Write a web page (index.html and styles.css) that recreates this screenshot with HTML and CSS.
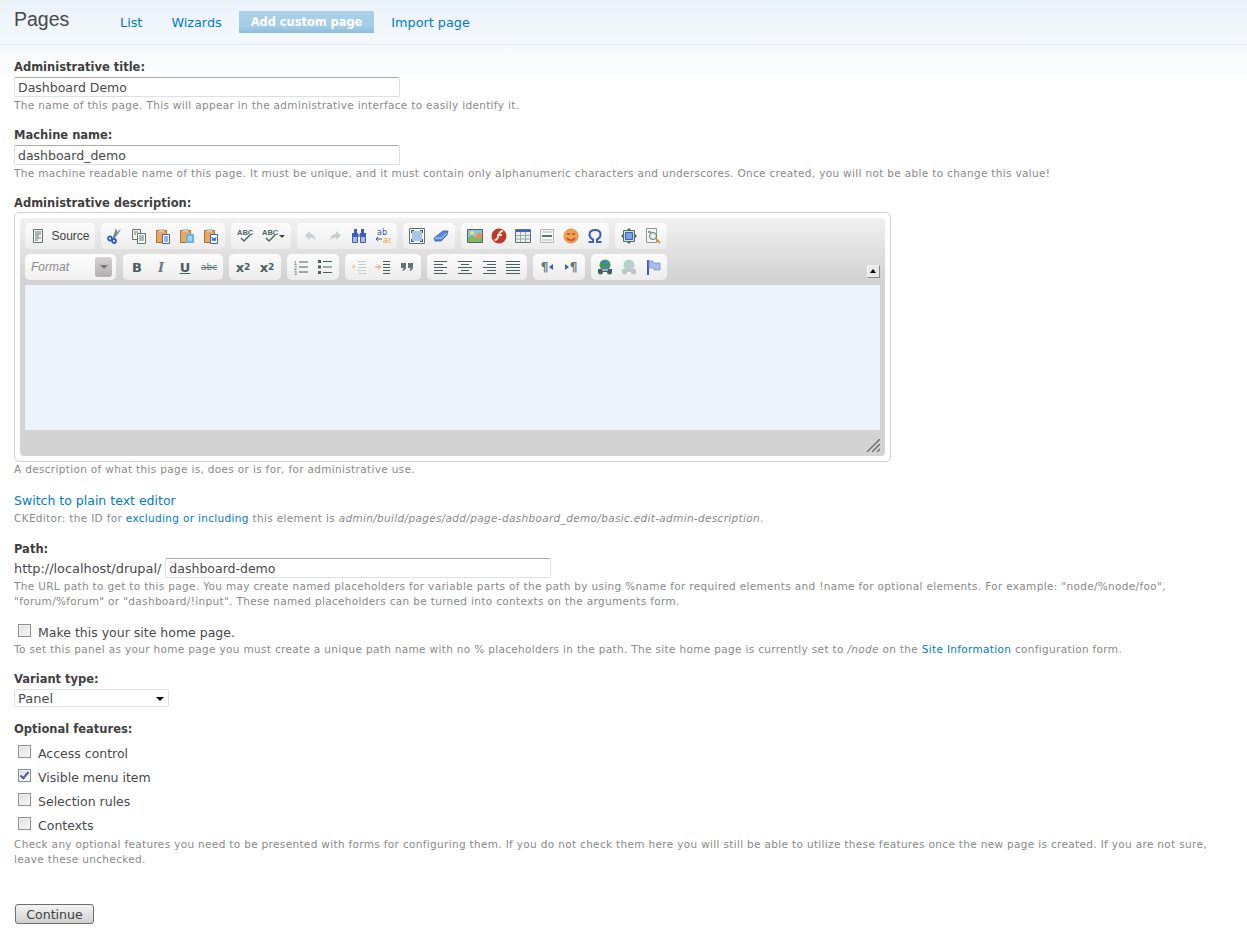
FILE: index.html
```html
<!DOCTYPE html>
<html lang="en">
<head>
  <meta charset="UTF-8">
  <meta name="viewport" content="width=device-width, initial-scale=1.0">
  <title>Pages</title>
  <link rel="stylesheet" href="styles.css">
</head>
<body>

<svg class="icon-defs" width="0" height="0">
  <symbol id="i-source" viewBox="0 0 16 16"><path d="M3.500 1.500h9v13h-9z" fill="#f7f7ef" stroke="#5f7470"/><path d="M5 4h6M5 6h6M5 8h4M5 10h6M5 12h3" stroke="#5f7470"/></symbol>
  <symbol id="i-cut" viewBox="0 0 16 16"><path d="M5 10 11 3l3-2-2 4-5 6z" fill="#8a9ba6"/><path d="M6 9 8 3l1-3 1 4-2 6z" fill="#6f8290"/><circle cx="3" cy="10.500" r="2" fill="none" stroke="#2f5cc4" stroke-width="1.800"/><circle cx="7" cy="13" r="2" fill="none" stroke="#2f5cc4" stroke-width="1.800"/></symbol>
  <symbol id="i-copy" viewBox="0 0 16 16"><path d="M1.500 1.500h8v10h-8z" fill="#f4f4ea" stroke="#5f7470"/><path d="M6.500 5.500h8v10h-8z" fill="#fff" stroke="#5f7470"/><path d="M8 8h5M8 10h5M8 12h5M3 4h4M3 6h2" stroke="#5f7470"/></symbol>
  <symbol id="i-paste" viewBox="0 0 16 16"><path d="M1.500 2.500h10v12h-10z" fill="#e8a860" stroke="#a87038"/><path d="M4 1h5v3H4z" fill="#c8c8c0"/><path d="M7.500 6.500h7v9h-7z" fill="#fff" stroke="#3a62c0"/><path d="M9 9h4M9 11h4M9 13h4" stroke="#3a62c0"/></symbol>
  <symbol id="i-paste-text" viewBox="0 0 16 16"><path d="M1.500 2.500h10v12h-10z" fill="#e8a860" stroke="#a87038"/><path d="M4 1h5v3H4z" fill="#c8c8c0"/><path d="M7 6h8v9H7z" fill="#6cb4e8"/><path d="M9 8h4v5H9z" fill="#9fd4f4"/></symbol>
  <symbol id="i-paste-word" viewBox="0 0 16 16"><path d="M1.500 2.500h10v12h-10z" fill="#e8a860" stroke="#a87038"/><path d="M4 1h5v3H4z" fill="#c8c8c0"/><path d="M7.500 6.500h7v9h-7z" fill="#fff" stroke="#3a62c0"/><path d="M9 9l1 4 1-3 1 3 1-4" fill="none" stroke="#3a62c0"/></symbol>
  <symbol id="i-undo" viewBox="0 0 16 16"><path d="M7 3 2 7.500 7 12V9.500c3 0 4.500 1 5.500 3 0-4-2-6.500-5.500-6.500z" fill="#c4ced2"/></symbol>
  <symbol id="i-redo" viewBox="0 0 16 16"><path d="M9 3l5 4.500L9 12V9.500c-3 0-4.500 1-5.500 3 0-4 2-6.500 5.500-6.500z" fill="#c4ced2"/></symbol>
  <symbol id="i-find" viewBox="0 0 16 16"><path d="M3 1h3v4h1v4H1V5h2zM10 1h3v4h2v4H9V5h1z" fill="#3e5cb8"/><path d="M1.500 8.500h5v6h-5zM9.500 8.500h5v6h-5z" fill="#a9bce8" stroke="#3e5cb8"/><path d="M7 6h2v3H7z" fill="#8898c8"/></symbol>
  <symbol id="i-max" viewBox="0 0 16 16"><path d="M.5.500h15v15H.5z" fill="#fff" stroke="#5f7470"/><path d="M3 3h10v10H3z" fill="#a8c4ec"/><path d="M2 2h3v1H3v2H2zM11 2h3v3h-1V3h-2zM2 11h1v2h2v1H2zM13 11h1v3h-3v-1h2z" fill="#4a5c58"/></symbol>
  <symbol id="i-eraser" viewBox="0 0 16 16"><path d="M1 10 10 3h5l-1 4-6 6H2z" fill="#5a88e0" stroke="#3458a8" stroke-width=".8"/><path d="M1.500 10h7L14 5" fill="none" stroke="#b8d0f4"/></symbol>
  <symbol id="i-image" viewBox="0 0 16 16"><path d="M.5 1.500h15v13H.5z" fill="#8cc4e0" stroke="#4e6a64"/><path d="M1 10l4-3 4 3 6-1v5H1z" fill="#8cb45c"/><circle cx="5" cy="5" r="2" fill="#f4e070"/><path d="M9 7l3-3 3 3v3H9z" fill="#e89048"/></symbol>
  <symbol id="i-flash" viewBox="0 0 16 16"><circle cx="8" cy="8" r="7.500" fill="#bd3a2c"/><path d="M12 3C8 3 8 6 7 9c-.5 2-2 3-3.500 3M6 7h5" fill="none" stroke="#f6e4dc" stroke-width="1.800"/></symbol>
  <symbol id="i-table" viewBox="0 0 16 16"><path d="M.5 1.500h15v13H.5z" fill="#eef0f0" stroke="#5f7470"/><path d="M1 2h14v2H1z" fill="#3e64c0"/><path d="M1 7.500h14M1 11h14M5.500 4v10M10.500 4v10" stroke="#9aa8a8"/></symbol>
  <symbol id="i-hr" viewBox="0 0 16 16"><path d="M1.500 1.500h13v13h-13z" fill="#f8f8f8" stroke="#b0b4b4"/><path d="M3 4h10M3 12h10" stroke="#b0b4b4"/><path d="M3 7h10v2H3z" fill="#5f7470"/></symbol>
  <symbol id="i-smiley" viewBox="0 0 16 16"><circle cx="8" cy="8" r="7" fill="#f4a050" stroke="#e88c40"/><path d="M4 6h3M9 6h3" stroke="#a05a20" stroke-width="1.500"/><path d="M4 10c2 3 6 3 8 0" fill="none" stroke="#b8482c" stroke-width="1.500"/></symbol>
  <symbol id="i-omega" viewBox="0 0 16 16"><path d="M1.500 14H6v-2.500C4 10.500 2.500 9 2.500 6.500 2.500 3.500 5 2 8 2s5.500 1.500 5.500 4.500c0 2.500-1.500 4-3.500 5V14h4.500" fill="none" stroke="#3e5cc0" stroke-width="2"/></symbol>
  <symbol id="i-block" viewBox="0 0 16 16"><path d="M8 0l2 2H6zM8 16l-2-2h4zM0 8l2-2v4zM16 8l-2 2V6z" fill="#4e6a64"/><path d="M2.500 2.500h11v11h-11z" fill="#cfe0d8" stroke="#4e6a64"/><path d="M4.500 4.500h7v7h-7z" fill="#7ca0e4" stroke="#3e5cc0"/></symbol>
  <symbol id="i-preview" viewBox="0 0 16 16"><path d="M1.500.5h10v14h-10z" fill="#f6f6f0" stroke="#8a9a98"/><circle cx="8" cy="8" r="3.500" fill="#e4eef4" stroke="#5f7470"/><path d="M11 11l4 4" stroke="#d89030" stroke-width="2"/><path d="M3 3h3v2H3z" fill="#8a9a98"/></symbol>
  <symbol id="i-ul" viewBox="0 0 16 16"><path d="M1 1h3v3H1zM1 6.500h3v3H1zM1 12h3v3H1z" fill="#46605e"/><path d="M6 2.500h9M6 8h9M6 13.500h9" stroke="#46605e"/></symbol>
  <symbol id="i-outdent" viewBox="0 0 16 16"><path d="M1 8h4M3.500 5.500 1 8l2.500 2.500" fill="none" stroke="#f2c89c"/><path d="M7 2.500h8M7 5.500h8M7 8.500h8M7 11.500h8M7 14.500h8" stroke="#c4ced2"/></symbol>
  <symbol id="i-indent" viewBox="0 0 16 16"><path d="M0 8h5M3 5.500 5.500 8 3 10.500" fill="none" stroke="#e89840"/><path d="M8 2.500h7M8 5.500h7M8 8.500h7M8 11.500h7M8 14.500h7" stroke="#46605e"/></symbol>
  <symbol id="i-quote" viewBox="0 0 16 16"><path d="M2 4h5v4c0 2-1 3-3 4l-.5-1c.7-.5 1-1 1-2H2zM9 4h5v4c0 2-1 3-3 4l-.5-1c.7-.5 1-1 1-2H9z" fill="#5f7470"/></symbol>
  <symbol id="i-left" viewBox="0 0 16 16"><path d="M1 2.500h13M1 5.500h9M1 8.500h13M1 11.500h9M1 14.500h13" stroke="#46605e"/></symbol>
  <symbol id="i-center" viewBox="0 0 16 16"><path d="M1 2.500h14M4 5.500h8M1 8.500h14M4 11.500h8M1 14.500h14" stroke="#46605e"/></symbol>
  <symbol id="i-right" viewBox="0 0 16 16"><path d="M2 2.500h13M6 5.500h9M2 8.500h13M6 11.500h9M2 14.500h13" stroke="#46605e"/></symbol>
  <symbol id="i-justify" viewBox="0 0 16 16"><path d="M1 2.500h14M1 5.500h14M1 8.500h14M1 11.500h14M1 14.500h14" stroke="#46605e"/></symbol>
  <symbol id="i-link" viewBox="0 0 16 16"><circle cx="8" cy="6" r="5.500" fill="#3c9a58"/><path d="M5 2h5v3H6zM9 7h3v3H8z" fill="#4a78d8"/><path d="M1 10h14v3H1z" fill="#46605e"/><circle cx="3.500" cy="13" r="2.500" fill="#46605e"/><circle cx="12.500" cy="13" r="2.500" fill="#46605e"/><path d="M5 11h6" stroke="#fff"/></symbol>
  <symbol id="i-unlink" viewBox="0 0 16 16"><circle cx="8" cy="6" r="5.500" fill="#b4d4c0"/><path d="M5 2h5v3H6zM9 7h3v3H8z" fill="#b8c8e8"/><path d="M1 10h14v3H1z" fill="#bcc6c6"/><circle cx="3.500" cy="13" r="2.500" fill="#bcc6c6"/><circle cx="12.500" cy="13" r="2.500" fill="#bcc6c6"/></symbol>
  <symbol id="i-flag" viewBox="0 0 16 16"><path d="M2 1h2v15H2z" fill="#3e5cc0"/><path d="M4 2h4v2h7v7H9V9H4z" fill="#a8bce8" stroke="#7c94d0" stroke-width=".8"/></symbol>
</svg>

<div class="page-head">
  <h1 class="page-title">Pages</h1>
  <ul class="tabs">
    <li><a href="#">List</a></li>
    <li><a href="#">Wizards</a></li>
    <li class="active"><a href="#">Add custom page</a></li>
    <li><a href="#">Import page</a></li>
  </ul>
</div>

<form class="page-form">
  <div class="field">
    <label class="field-label" for="adminTitle">Administrative title:</label>
    <input class="text-input" type="text" id="adminTitle" value="Dashboard Demo">
    <p class="desc">The name of this page. This will appear in the administrative interface to easily identify it.</p>
  </div>

  <div class="field">
    <label class="field-label" for="machineName">Machine name:</label>
    <input class="text-input" type="text" id="machineName" value="dashboard_demo">
    <p class="desc">The machine readable name of this page. It must be unique, and it must contain only alphanumeric characters and underscores. Once created, you will not be able to change this value!</p>
  </div>

  <div class="field">
    <div class="field-label">Administrative description:</div>
    <div class="editor">
      <div class="editor-inner">
        <div class="toolbar">
          <div class="tool-row">
            <span class="tool-group"><span class="tool tool-source"><svg class="ico"><use href="#i-source"/></svg>Source</span></span>
            <span class="tool-group">
              <span class="tool"><svg class="ico"><use href="#i-cut"/></svg></span>
              <span class="tool"><svg class="ico"><use href="#i-copy"/></svg></span>
              <span class="tool"><svg class="ico"><use href="#i-paste"/></svg></span>
              <span class="tool"><svg class="ico"><use href="#i-paste-text"/></svg></span>
              <span class="tool"><svg class="ico"><use href="#i-paste-word"/></svg></span>
            </span>
            <span class="tool-group">
              <span class="tool"><svg class="ico" viewBox="0 0 16 16"><text x="0" y="7" class="icon-abc">ABC</text><path d="M4 10l3 3 6-6" fill="none" stroke="#4a6a68" stroke-width="1.500"/></svg></span>
              <span class="tool tool-wide"><svg class="ico" viewBox="0 0 16 16"><text x="0" y="7" class="icon-abc">ABC</text><path d="M4 10l3 3 6-6" fill="none" stroke="#4a6a68" stroke-width="1.500"/></svg><i class="tool-caret"></i></span>
            </span>
            <span class="tool-group">
              <span class="tool"><svg class="ico"><use href="#i-undo"/></svg></span>
              <span class="tool"><svg class="ico"><use href="#i-redo"/></svg></span>
              <span class="tool"><svg class="ico"><use href="#i-find"/></svg></span>
              <span class="tool"><svg class="ico" viewBox="0 0 16 16"><text class="icon-ab"><tspan x="2" y="7">ab</tspan><tspan class="icon-ac" x="8" y="15">ac</tspan></text><path d="M1 11h6M3 9l-2 2 2 2" fill="none" stroke="#4050b0"/></svg></span>
            </span>
            <span class="tool-group">
              <span class="tool"><svg class="ico"><use href="#i-max"/></svg></span>
              <span class="tool"><svg class="ico"><use href="#i-eraser"/></svg></span>
            </span>
            <span class="tool-group">
              <span class="tool"><svg class="ico"><use href="#i-image"/></svg></span>
              <span class="tool"><svg class="ico"><use href="#i-flash"/></svg></span>
              <span class="tool"><svg class="ico"><use href="#i-table"/></svg></span>
              <span class="tool"><svg class="ico"><use href="#i-hr"/></svg></span>
              <span class="tool"><svg class="ico"><use href="#i-smiley"/></svg></span>
              <span class="tool"><svg class="ico"><use href="#i-omega"/></svg></span>
            </span>
            <span class="tool-group">
              <span class="tool"><svg class="ico"><use href="#i-block"/></svg></span>
              <span class="tool"><svg class="ico"><use href="#i-preview"/></svg></span>
            </span>
          </div>
          <div class="tool-row tool-row-second">
            <span class="tool-combo"><span class="combo-text">Format</span><span class="combo-arrow"></span></span>
            <span class="tool-group">
              <span class="tool tool-letter tool-bold">B</span>
              <span class="tool tool-letter tool-italic">I</span>
              <span class="tool tool-letter tool-under">U</span>
              <span class="tool tool-letter tool-strike">abc</span>
            </span>
            <span class="tool-group">
              <span class="tool tool-letter tool-bold">x<sub>2</sub></span>
              <span class="tool tool-letter tool-bold">x<sup>2</sup></span>
            </span>
            <span class="tool-group">
              <span class="tool"><svg class="ico" viewBox="0 0 16 16"><text class="icon-num"><tspan x="1" y="5.500">1</tspan><tspan x="1" y="10.500">2</tspan><tspan x="1" y="15.500">3</tspan></text><path d="M6 3h9M6 8h9M6 13h9" stroke="#46605e"/></svg></span>
              <span class="tool"><svg class="ico"><use href="#i-ul"/></svg></span>
            </span>
            <span class="tool-group">
              <span class="tool"><svg class="ico"><use href="#i-outdent"/></svg></span>
              <span class="tool"><svg class="ico"><use href="#i-indent"/></svg></span>
              <span class="tool"><svg class="ico"><use href="#i-quote"/></svg></span>
            </span>
            <span class="tool-group">
              <span class="tool"><svg class="ico"><use href="#i-left"/></svg></span>
              <span class="tool"><svg class="ico"><use href="#i-center"/></svg></span>
              <span class="tool"><svg class="ico"><use href="#i-right"/></svg></span>
              <span class="tool"><svg class="ico"><use href="#i-justify"/></svg></span>
            </span>
            <span class="tool-group">
              <span class="tool tool-letter tool-para">&para;<i class="para-left"></i></span>
              <span class="tool tool-letter tool-para"><i class="para-right"></i>&para;</span>
            </span>
            <span class="tool-group">
              <span class="tool"><svg class="ico"><use href="#i-link"/></svg></span>
              <span class="tool"><svg class="ico"><use href="#i-unlink"/></svg></span>
              <span class="tool"><svg class="ico"><use href="#i-flag"/></svg></span>
            </span>
            <span class="collapse-btn"></span>
          </div>
        </div>
        <div class="editor-body"></div>
        <div class="editor-foot">
          <svg class="grip" width="13" height="13" viewBox="0 0 13 13"><path d="M0 13 13 0M5 13l8-8M10 13l3-3" stroke="#666" stroke-width="1.300"/></svg>
        </div>
      </div>
    </div>
    <p class="desc desc-editor">A description of what this page is, does or is for, for administrative use.</p>
  </div>

  <div class="switch-block">
    <a class="switch-link" href="#">Switch to plain text editor</a>
    <p class="desc desc-cke">CKEditor: the ID for <a href="#">excluding or including</a> this element is <em>admin/build/pages/add/page-dashboard_demo/basic.edit-admin-description</em>.</p>
  </div>

  <div class="field field-path">
    <label class="field-label" for="path">Path:</label>
    <div class="path-row">
      <span class="path-prefix">http://localhost/drupal/</span>
      <input class="text-input" type="text" id="path" value="dashboard-demo">
    </div>
    <p class="desc">The URL path to get to this page. You may create named placeholders for variable parts of the path by using %name for required elements and !name for optional elements. For example: "node/%node/foo", "forum/%forum" or "dashboard/!input". These named placeholders can be turned into contexts on the arguments form.</p>
  </div>

  <div class="field field-home">
    <label class="check-row"><input type="checkbox"> Make this your site home page.</label>
    <p class="desc">To set this panel as your home page you must create a unique path name with no % placeholders in the path. The site home page is currently set to <em>/node</em> on the <a href="#">Site Information</a> configuration form.</p>
  </div>

  <div class="field field-variant">
    <label class="field-label" for="variant">Variant type:</label>
    <span class="select-wrap">
      <select id="variant"><option>Panel</option></select>
    </span>
  </div>

  <div class="field field-features">
    <div class="field-label">Optional features:</div>
    <label class="check-row"><input type="checkbox"> Access control</label>
    <label class="check-row"><input type="checkbox" checked> Visible menu item</label>
    <label class="check-row"><input type="checkbox"> Selection rules</label>
    <label class="check-row"><input type="checkbox"> Contexts</label>
    <p class="desc desc-features">Check any optional features you need to be presented with forms for configuring them. If you do not check them here you will still be able to utilize these features once the new page is created. If you are not sure, leave these unchecked.</p>
  </div>

  <button class="btn-continue" type="button">Continue</button>
</form>

</body>
</html>
```

FILE: styles.css
```css
body {
  margin: 0;
  padding: 0;
  height: 939px;
  overflow: hidden;
  font-family: "DejaVu Sans", sans-serif;
  font-size: 12.5px;
  color: #494949;
  background: linear-gradient(to bottom, #e9f1f9 0, #f5f9fc 44px, #f5f9fc 45px, #fff 85px) no-repeat #fff;
}

a {
  color: #027ac6;
  text-decoration: none;
}

.icon-defs {
  position: absolute;
}

.icon-abc {
  font: bold 7.500px "Liberation Sans", sans-serif;
  fill: #4a6a68;
}

.icon-ab {
  font: 8px "DejaVu Sans", sans-serif;
  fill: #4050b0;
}

.icon-ac {
  fill: #e8a040;
}

.icon-num {
  font: 5px "Liberation Sans", sans-serif;
  fill: #46605e;
}

/* header */
.page-head {
  display: flex;
  height: 45px;
  box-sizing: border-box;
  border-bottom: 1px solid #e3ebf2;
  padding-left: 14px;
}

.page-title {
  margin: 0;
  width: 94px;
  font-family: "Liberation Sans", sans-serif;
  font-size: 19.500px;
  font-weight: normal;
  line-height: 38px;
  color: #494949;
}

.tabs {
  display: flex;
  gap: 5px;
  margin: 11px 0 0;
  padding: 0;
  list-style: none;
  font-size: 12.800px;
  line-height: 23px;
}

.tabs a {
  display: block;
  height: 22px;
  padding: 0 12px;
}

.tabs li.active a {
  color: #fff;
  font-size: 11.400px;
  font-weight: bold;
  background: linear-gradient(to bottom, #a9d0e8 0, #a4cde6 70%, #8cbcdc 100%);
}

/* form */
.page-form {
  padding: 0 14px;
}

.field {
  margin-bottom: 15px;
}

.field-label {
  display: block;
  font-size: 11.500px;
  font-weight: bold;
  line-height: 15px;
  color: #3f3f3f;
}

.page-form > .field:first-child {
  padding-top: 15px;
}

.text-input {
  display: block;
  width: 386px;
  height: 20px;
  box-sizing: border-box;
  margin: 2px 0 0;
  padding: 0 3px;
  border: 1px solid #d9e0e6;
  border-top-color: #a8a8a8;
  border-radius: 2px;
  background: #fff;
  font: 12.500px "DejaVu Sans", sans-serif;
  color: #494949;
}

.desc {
  margin: 1px 0 0;
  font-size: 10.500px;
  line-height: 15px;
  color: #898989;
  letter-spacing: 0.330px;
}

/* editor */
.editor {
  width: 877px;
  height: 250px;
  box-sizing: border-box;
  margin-top: 1px;
  padding: 5px;
  background: #fff;
  border: 1px solid #d0d0d0;
  border-radius: 5px;
}

.editor-inner {
  display: flex;
  flex-direction: column;
  height: 238px;
  box-sizing: border-box;
  padding: 0 5px;
  background: linear-gradient(to bottom, #f1f1f1 0, #d3d3d3 60px) #d3d3d3;
  border-radius: 4px;
}

.toolbar {
  height: 67px;
  padding-top: 5px;
  box-sizing: border-box;
}

.tool-row {
  display: flex;
  gap: 6px;
  height: 26px;
}

.tool-row-second {
  position: relative;
  margin-top: 5px;
}

.tool-group {
  display: flex;
  padding: 0 2px;
  border-radius: 5px;
  background: linear-gradient(to bottom, #fcfcfc, #ececec);
}

.tool {
  display: flex;
  align-items: center;
  justify-content: center;
  width: 24px;
  height: 26px;
}

.tool-wide {
  width: 32px;
  gap: 1px;
}

.tool-caret {
  border: 3px solid transparent;
  border-top: 3px solid #444;
  border-bottom: 0;
}

.tool-source {
  width: 66px;
  gap: 5px;
  font: 12px "Liberation Sans", sans-serif;
  color: #444;
}

.tool-letter {
  color: #46605e;
  line-height: 16px;
}

.tool-bold {
  font: bold 13px "DejaVu Sans", sans-serif;
}

.tool-bold sub,
.tool-bold sup {
  font-size: 9px;
  line-height: 0;
}

.tool-italic {
  font: italic bold 13px "DejaVu Serif", serif;
  color: #6a7c7a;
}

.tool-under {
  font: bold 13px "DejaVu Sans", sans-serif;
  text-decoration: underline;
}

.tool-strike {
  font: 9px "DejaVu Sans", sans-serif;
  color: #5f7470;
  text-decoration: line-through;
}

.tool-para {
  gap: 1px;
  font: bold 12px "DejaVu Sans", sans-serif;
  color: #5f7470;
}

.para-left,
.para-right {
  border: 3px solid transparent;
}

.para-left {
  border-right: 4px solid #3e5cb8;
  border-left: 0;
}

.para-right {
  border-left: 4px solid #3e5cb8;
  border-right: 0;
}

.ico {
  width: 16px;
  height: 16px;
  flex: none;
}

.tool-combo {
  display: flex;
  align-items: center;
  justify-content: space-between;
  width: 91px;
  margin-right: 1px;
  box-sizing: border-box;
  padding: 0 4px 0 6px;
  border-radius: 5px;
  background: linear-gradient(to bottom, #fdfdfd, #f0f0f0);
}

.combo-text {
  font: italic 12px "Liberation Sans", sans-serif;
  color: #8a8a8a;
}

.combo-arrow {
  position: relative;
  width: 17px;
  height: 20px;
  border-radius: 3px;
  background: linear-gradient(to bottom, #d6d2d2, #b4aeae);
}

.combo-arrow::after {
  content: "";
  position: absolute;
  left: 5px;
  top: 8px;
  border: 4px solid transparent;
  border-top: 4px solid #777;
  border-bottom: 0;
}

.collapse-btn {
  position: absolute;
  right: 0;
  top: 11px;
  width: 13px;
  height: 13px;
  box-sizing: border-box;
  background: #e8e8e8;
  border: 1px solid #f4f4f4;
  border-right-color: #8a8a8a;
  border-bottom-color: #8a8a8a;
}

.collapse-btn::after {
  content: "";
  position: absolute;
  left: 2px;
  top: 3px;
  border: 3.500px solid transparent;
  border-bottom: 4px solid #000;
  border-top: 0;
}

.editor-body {
  height: 145px;
  background: #edf3fa;
}

.editor-foot {
  display: flex;
  flex: 1;
  justify-content: flex-end;
  align-items: flex-end;
  padding-bottom: 4px;
}

.grip {
  display: block;
}

.desc-editor {
  margin-top: 0;
}

/* switch link + cke note */
.switch-block {
  margin-top: 16px;
}

.switch-link {
  font-size: 12.500px;
  line-height: 15px;
  display: block;
}

.desc-cke {
  margin-top: 3px;
}

.field-path {
  margin-top: 16px;
}

.path-row {
  display: flex;
  align-items: center;
  gap: 4px;
  margin-top: 1px;
  margin-bottom: 0;
}

.path-row .text-input {
  margin-top: 0;
}

.path-prefix {
  font-size: 12.900px;
}

/* check rows */
.check-row {
  display: flex;
  align-items: center;
  gap: 7px;
  height: 24px;
  padding-left: 4px;
}

.check-row input {
  position: relative;
  appearance: none;
  width: 13px;
  height: 13px;
  margin: -4px 0 0;
  flex: none;
  box-sizing: border-box;
  border: 1px solid #8e8f8f;
  background: linear-gradient(135deg, #dcdcdc, #fbfbfb);
  box-shadow: inset 0 0 0 1px #f2f2f2;
}

.check-row input:checked::after {
  content: "";
  position: absolute;
  left: 3px;
  top: 0;
  width: 3px;
  height: 7px;
  border: solid #4a5a9c;
  border-width: 0 2px 2px 0;
  transform: rotate(40deg);
}

.field-home {
  margin-top: -4px;
}

.field-home .desc {
  margin-top: -2px;
}

.select-wrap {
  position: relative;
  display: block;
  width: 155px;
  margin-top: 2px;
}

.select-wrap select {
  appearance: none;
  display: block;
  width: 155px;
  height: 18px;
  padding: 0 3px;
  border: 1px solid #d9e0e6;
  border-radius: 2px;
  background: #fff;
  font: 13px "DejaVu Sans", sans-serif;
  color: #494949;
}

.select-wrap::after {
  content: "";
  position: absolute;
  right: 5px;
  top: 8px;
  border: 4px solid transparent;
  border-top: 4px solid #000;
  border-bottom: 0;
}

.field-features .field-label {
  margin-bottom: 4px;
}

.desc-features {
  margin-top: 0;
}

.btn-continue {
  display: block;
  width: 79px;
  height: 20px;
  margin: 37px 0 0 1px;
  padding: 0;
  border: 1px solid #6e6e6e;
  border-radius: 3px;
  background: linear-gradient(to bottom, #f4f4f4, #cfcfcf);
  font: 12.600px "DejaVu Sans", sans-serif;
  color: #3f3f3f;
}
```
